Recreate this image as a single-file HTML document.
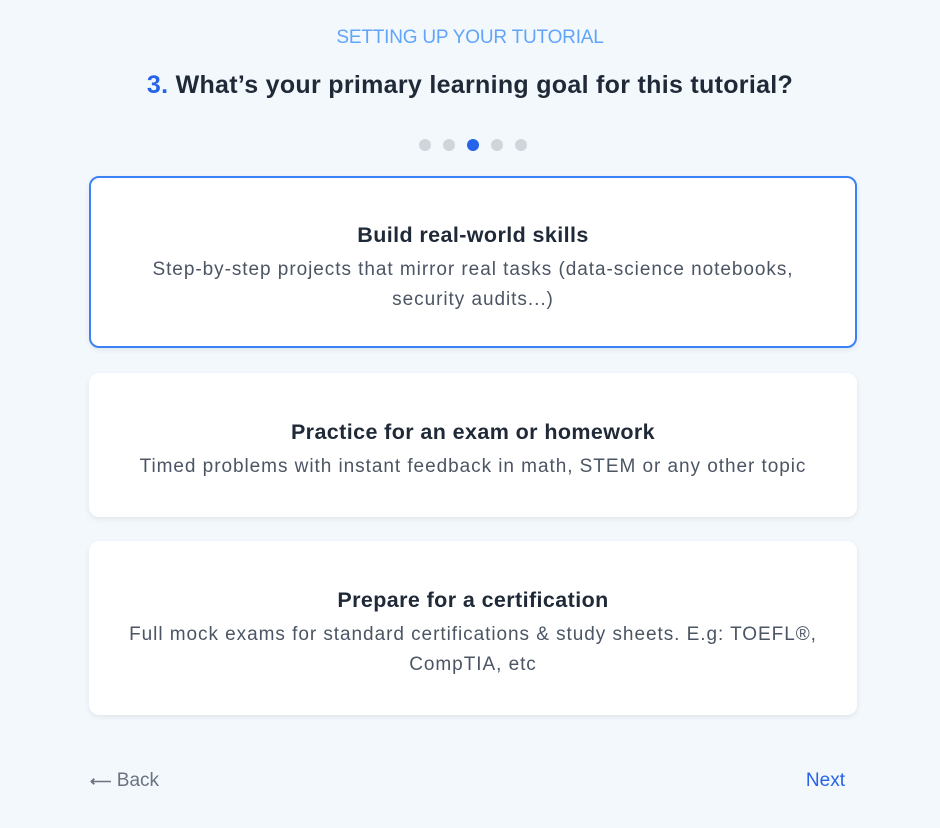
<!DOCTYPE html>
<html><head><meta charset="utf-8"><style>
*{margin:0;padding:0;box-sizing:border-box}
body{width:940px;height:828px;background:#f3f8fd;font-family:"Liberation Sans",sans-serif;position:relative;overflow:hidden}
.a{position:absolute;left:0;width:940px;text-align:center;white-space:nowrap}
.card{position:absolute;left:89px;width:768px;background:#fff;border-radius:10px;box-shadow:0 2px 6px rgba(0,0,0,.08)}
.card.sel{border:2.5px solid #3b82f6}
.t{position:absolute;left:0;width:100%;text-align:center;font-size:21.5px;font-weight:bold;color:#1f2937;letter-spacing:0.4px;white-space:nowrap}
.d{position:absolute;left:0;width:100%;text-align:center;font-size:19px;color:#4b5563;line-height:30px;letter-spacing:0.95px;white-space:nowrap}
.dot{position:absolute;top:139px;width:12px;height:12px;border-radius:50%;background:#d1d5db}
</style></head><body>
<div class="a" style="top:27px;font-size:19px;color:#60a5fa;letter-spacing:-0.2px">SETTING UP YOUR TUTORIAL</div>
<div class="a" style="top:71px;font-size:25px;font-weight:bold;color:#1f2937;letter-spacing:0.3px"><span style="color:#2563eb">3.</span> What’s your primary learning goal for this tutorial?</div>
<div class="dot" style="left:419px"></div>
<div class="dot" style="left:443px"></div>
<div class="dot" style="left:467px;background:#2563eb"></div>
<div class="dot" style="left:491px"></div>
<div class="dot" style="left:515px"></div>
<div class="card sel" style="top:176px;height:172px">
<div class="t" style="top:45px">Build real-world skills</div>
<div class="d" style="top:77px">Step-by-step projects that mirror real tasks (data-science notebooks,<br>security audits...)</div>
</div>
<div class="card" style="top:373px;height:144px">
<div class="t" style="top:47px">Practice for an exam or homework</div>
<div class="d" style="top:79px">Timed problems with instant feedback in math, STEM or any other topic</div>
</div>
<div class="card" style="top:541px;height:174px">
<div class="t" style="top:47px">Prepare for a certification</div>
<div class="d" style="top:79px">Full mock exams for standard certifications &amp; study sheets. E.g: TOEFL®,<br>CompTIA, etc</div>
</div>
<div style="position:absolute;left:90px;top:770px;font-size:19px;color:#6b7280"><span style="font-size:15px;font-weight:bold">⟵</span> Back</div>
<div style="position:absolute;right:95px;top:770px;font-size:19px;color:#2563eb">Next</div>
</body></html>
